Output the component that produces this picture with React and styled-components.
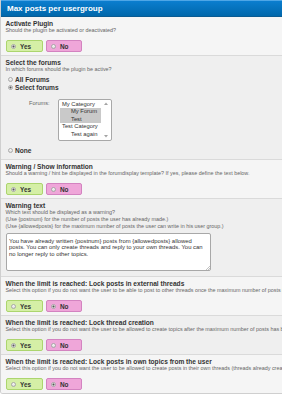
import React from "react";
import styled, { createGlobalStyle } from "styled-components";

const Global = createGlobalStyle`
  html, body { margin: 0; padding: 0; background: #fff; overflow: hidden; }
  body { font-family: "Liberation Sans", Arial, sans-serif; }
  * { box-sizing: border-box; }
`;

const Panel = styled.div`
  width: 480px;
  border: 1px solid #cfcfcf;
  border-top: none;
  border-radius: 0 0 3px 3px;
  overflow: hidden;
`;

const Header = styled.div`
  height: 17px;
  display: flex;
  align-items: center;
  padding-left: 6px;
  background: linear-gradient(#0b7ecf, #0067ab);
  border-top: 1px solid #4ea6e6;
  border-bottom: 1px solid #0a5b92;
  color: #fff;
  font-weight: bold;
  font-size: 8px;
`;

const Row = styled.div`
  background: ${(p) => (p.$alt ? "#efefef" : "#f5f5f5")};
  padding: 3px 5px ${(p) => p.$pb || 3}px 4.5px;
  border-bottom: 1px solid #dadada;
  &:last-child { border-bottom: none; }
`;

const Heading = styled.div`
  font-weight: bold;
  font-size: 6.6px;
  line-height: 7px;
  color: #333;
  white-space: nowrap;
`;

const Desc = styled.div`
  font-size: 5.4px;
  line-height: 7px;
  color: #666;
  white-space: nowrap;
`;

const YesNo = styled.div`
  display: flex;
  gap: 3px;
  margin-top: 6px;
  margin-left: 0.5px;
`;

const Choice = styled.label`
  display: flex;
  align-items: center;
  gap: 4.5px;
  height: 12px;
  width: ${(p) => (p.$tone === "yes" ? 37 : 36)}px;
  padding-left: 3.5px;
  border-radius: 2px;
  border: 1px solid ${(p) => (p.$tone === "yes" ? "#acd56e" : "#d383c0")};
  background: ${(p) => (p.$tone === "yes" ? "#d5efa6" : "#efa6d9")};
  color: #333;
  font-weight: bold;
  font-size: 6.4px;
`;

const Radio = styled.span`
  width: 5px;
  height: 5px;
  flex: none;
  border-radius: 50%;
  border: 0.6px solid #a9a9a9;
  background: ${(p) =>
    p.$checked
      ? "radial-gradient(circle, #555 0 0.9px, #eee 1.1px)"
      : "linear-gradient(#fafafa, #dcdcdc)"};
`;

const RadioList = styled.div`
  margin-top: ${(p) => p.$mt || 0}px;
`;

const RadioOption = styled.label`
  display: flex;
  align-items: center;
  gap: 2px;
  height: 8px;
  padding-left: 2.5px;
  font-weight: bold;
  font-size: 6.6px;
  color: #333;
`;

const ForumPicker = styled.div`
  display: flex;
  align-items: flex-start;
  margin-top: 8px;
  padding-left: 23.5px;
`;

const PickerLabel = styled.span`
  width: 29px;
  font-size: 5.6px;
  line-height: 7px;
  padding-top: 1px;
  color: #666;
`;

const ListBox = styled.div`
  display: flex;
  width: 54px;
  height: 42px;
  border: 1px solid #a8a8a8;
  border-radius: 2px;
  background: #fff;
`;

const Items = styled.div`
  width: 42px;
  padding: 0.5px 0 0 1px;
`;

const Item = styled.div`
  height: 7.5px;
  line-height: 7.5px;
  font-size: 5.8px;
  color: #333;
  white-space: nowrap;
  padding-left: ${(p) => (p.$level ? 11 : 2)}px;
  background: ${(p) => (p.$selected ? "#c9c9c9" : "transparent")};
`;

const ScrollBar = styled.div`
  width: 10px;
  display: flex;
  flex-direction: column;
  justify-content: space-between;
  align-items: center;
  padding: 2px 0;
`;

const TextWrap = styled.div`
  position: relative;
  margin-top: 3px;
  margin-left: 0.5px;
  width: 205px;
`;

const TextArea = styled.textarea`
  display: block;
  width: 205px;
  height: 38px;
  border: 1px solid #a8a8a8;
  border-radius: 2px;
  background: #fff;
  padding: 3.5px 2px;
  font-family: "Liberation Sans", Arial, sans-serif;
  font-size: 5.9px;
  line-height: 6.5px;
  color: #333;
  resize: none;
  overflow: hidden;
  outline: none;
`;

const Grip = styled.svg`
  position: absolute;
  right: 1px;
  bottom: 1px;
`;

const Arrow = ({ up }) => (
  <svg width="4" height="3" viewBox="0 0 4 3">
    <path d={up ? "M0 3 L2 0.5 L4 3 Z" : "M0 0 L2 2.5 L4 0 Z"} fill="#a3a3a3" />
  </svg>
);

const YesNoField = ({ value }) => (
  <YesNo>
    <Choice $tone="yes">
      <Radio $checked={value} />
      Yes
    </Choice>
    <Choice $tone="no">
      <Radio $checked={!value} />
      No
    </Choice>
  </YesNo>
);

const forums = [
  { name: "My Category", level: 0 },
  { name: "My Forum", level: 1, selected: true },
  { name: "Test", level: 1, selected: true },
  { name: "Test Category", level: 0 },
  { name: "Test again", level: 1 },
];

const warning =
  "You have already written {postnum} posts from {allowedposts} allowed posts. You can only create threads and reply to your own threads. You can no longer reply to other topics.";

export default function App() {
  return (
    <>
      <Global />
      <Panel>
        <Header>Max posts per usergroup</Header>
        <Row>
          <Heading>Activate Plugin</Heading>
          <Desc>Should the plugin be activated or deactivated?</Desc>
          <YesNoField value={true} />
        </Row>
        <Row $alt $pb={5}>
          <Heading>Select the forums</Heading>
          <Desc>In which forums should the plugin be active?</Desc>
          <RadioList $mt={2}>
            <RadioOption>
              <Radio />
              All Forums
            </RadioOption>
            <RadioOption>
              <Radio $checked />
              Select forums
            </RadioOption>
          </RadioList>
          <ForumPicker>
            <PickerLabel>Forums:</PickerLabel>
            <ListBox>
              <Items>
                {forums.map((f) => (
                  <Item key={f.name} $level={f.level} $selected={f.selected}>
                    {f.name}
                  </Item>
                ))}
              </Items>
              <ScrollBar>
                <Arrow up />
                <Arrow />
              </ScrollBar>
            </ListBox>
          </ForumPicker>
          <RadioList $mt={5}>
            <RadioOption>
              <Radio />
              None
            </RadioOption>
          </RadioList>
        </Row>
        <Row>
          <Heading>Warning / Show information</Heading>
          <Desc>
            Should a warning / hint be displayed in the forumdisplay template? If yes, please define the text below.
          </Desc>
          <YesNoField value={true} />
        </Row>
        <Row $alt $pb={5}>
          <Heading>Warning text</Heading>
          <Desc>Which text should be displayed as a warning?</Desc>
          <Desc>(Use {"{postnum}"} for the number of posts the user has already made.)</Desc>
          <Desc>
            (Use {"{allowedposts}"} for the maximum number of posts the user can write in his user group.)
          </Desc>
          <TextWrap>
            <TextArea defaultValue={warning} />
            <Grip width="5" height="5" viewBox="0 0 5 5">
              <path d="M1 5 L5 1 M3 5 L5 3" stroke="#9a9a9a" strokeWidth="0.6" />
            </Grip>
          </TextWrap>
        </Row>
        <Row>
          <Heading>When the limit is reached: Lock posts in external threads</Heading>
          <Desc>
            Select this option if you do not want the user to be able to post to other threads once the maximum number of posts is reached.
          </Desc>
          <YesNoField value={false} />
        </Row>
        <Row $alt>
          <Heading>When the limit is reached: Lock thread creation</Heading>
          <Desc>
            Select this option if you do not want the user to be allowed to create topics after the maximum number of posts has been reached.
          </Desc>
          <YesNoField value={true} />
        </Row>
        <Row>
          <Heading>When the limit is reached: Lock posts in own topics from the user</Heading>
          <Desc>
            Select this option if you do not want the user to be allowed to create posts in their own threads (threads already created by the user).
          </Desc>
          <YesNoField value={false} />
        </Row>
      </Panel>
    </>
  );
}
